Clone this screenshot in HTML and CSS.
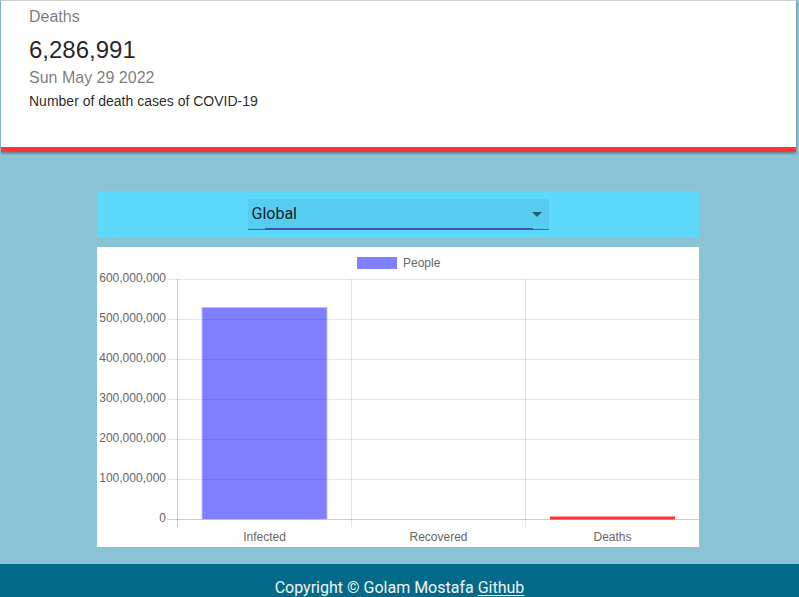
FILE: index.html
```html
<!DOCTYPE html>
<html lang="en">
<head>
<meta charset="utf-8">
<title>COVID-19 Tracker</title>
<link rel="stylesheet" href="styles.css">
</head>
<body>
<div class="page">
  <div class="card">
    <p class="card-label">Deaths</p>
    <h2 class="card-value">6,286,991</h2>
    <p class="card-date">Sun May 29 2022</p>
    <p class="card-desc">Number of death cases of COVID-19</p>
  </div>

  <div class="picker">
    <div class="select">
      <span class="select-value">Global</span>
      <svg class="select-icon" viewBox="0 0 24 24" width="24" height="24"><path d="M7 10l5 5 5-5z"/></svg>
    </div>
  </div>

  <div class="chart">
    <svg class="chart-svg" width="602" height="300" viewBox="0 0 602 300">
      <g class="legend">
        <rect x="260" y="10" width="40" height="12" fill="rgba(0,0,255,0.5)"/>
        <text x="306" y="19.5" class="tick">People</text>
      </g>
      <g class="grid" shape-rendering="crispEdges">
        <line x1="70" y1="32.5" x2="602" y2="32.5"/>
        <line x1="70" y1="72.5" x2="602" y2="72.5"/>
        <line x1="70" y1="112.5" x2="602" y2="112.5"/>
        <line x1="70" y1="152.5" x2="602" y2="152.5"/>
        <line x1="70" y1="192.5" x2="602" y2="192.5"/>
        <line x1="70" y1="232.5" x2="602" y2="232.5"/>
        <line x1="254.5" y1="32" x2="254.5" y2="280"/>
        <line x1="428.5" y1="32" x2="428.5" y2="280"/>
      </g>
      <g class="axis" shape-rendering="crispEdges">
        <line x1="70" y1="272.5" x2="602" y2="272.5"/>
        <line x1="80.5" y1="32" x2="80.5" y2="280"/>
      </g>
      <g class="ylabels">
        <text x="69" y="34.5">600,000,000</text>
        <text x="69" y="74.5">500,000,000</text>
        <text x="69" y="114.5">400,000,000</text>
        <text x="69" y="154.5">300,000,000</text>
        <text x="69" y="194.5">200,000,000</text>
        <text x="69" y="234.5">100,000,000</text>
        <text x="69" y="274.5">0</text>
      </g>
      <rect x="105" y="60.5" width="125" height="212" fill="rgba(0,0,255,0.5)" stroke="rgba(190,190,255,0.9)" stroke-width="1"/>
      <rect x="453" y="269.5" width="125" height="3" fill="rgba(255,0,0,0.8)"/>
      <g class="xlabels">
        <text x="167.5" y="294">Infected</text>
        <text x="341.5" y="294">Recovered</text>
        <text x="515.5" y="294">Deaths</text>
      </g>
    </svg>
  </div>

  <footer class="footer">
    <p class="footer-text">Copyright © Golam Mostafa <a class="footer-link" href="#">Github</a></p>
  </footer>
</div>
</body>
</html>
```

FILE: styles.css
```css
* { box-sizing: border-box; }

html, body {
  margin: 0;
  padding: 0;
  background: #8ac4d4;
  font-family: Roboto, "Liberation Sans", Arial, sans-serif;
  overflow: hidden;
}

.page {
  display: flex;
  flex-direction: column;
  height: 597px;
}

.card {
  margin: 0 3px 0 1px;
  background: #fff;
  border-top: 1px solid #cfcfcf;
  border-bottom: 5px solid #ff3333;
  padding: 4px 28px 37px 28px;
  box-shadow: 0 2px 2px rgba(0, 0, 0, 0.22), 1px 1px 2px rgba(0, 0, 0, 0.14);
  height: 152px;
  font-family: "Liberation Sans", Arial, Helvetica, sans-serif;
}

.card-label {
  margin: 0 0 5px;
  font-size: 16px;
  line-height: 24px;
  color: rgba(0, 0, 0, 0.54);
}

.card-value {
  margin: 0;
  font-size: 24px;
  font-weight: 400;
  line-height: 32px;
  color: rgba(0, 0, 0, 0.87);
}

.card-date {
  margin: 0 0 1px;
  font-size: 16px;
  line-height: 24px;
  color: rgba(0, 0, 0, 0.54);
}

.card-desc {
  margin: 0;
  font-size: 14px;
  line-height: 20px;
  color: rgba(0, 0, 0, 0.87);
}

.picker {
  margin: 39px 0 0 97px;
  width: 602px;
  height: 47px;
  background: #5cd9fd;
  padding: 8px 0;
  display: flex;
  justify-content: center;
}

.select {
  position: relative;
  width: 301px;
  height: 31px;
  background: rgba(0, 0, 0, 0.06);
  border-bottom: 1px solid rgba(0, 0, 0, 0.42);
  display: flex;
  align-items: center;
  padding: 0 0 1px 4px;
}

.select::after {
  content: "";
  position: absolute;
  left: 17px;
  right: 16px;
  bottom: -1px;
  height: 2px;
  background: #3f51b5;
}

.select-value {
  font-size: 16px;
  line-height: 19px;
  color: rgba(0, 0, 0, 0.87);
  padding-top: 0;
}

.select-icon {
  margin-left: auto;
  fill: rgba(0, 0, 0, 0.54);
}

.chart {
  margin: 9px 0 0 97px;
  width: 602px;
  height: 300px;
  background: #fff;
}

.chart-svg {
  display: block;
  font-family: "Liberation Sans", Arial, Helvetica, sans-serif;
  font-size: 12px;
}

.chart-svg text { fill: #666; }
.tick { fill: #666; }

.grid line { stroke: rgba(0, 0, 0, 0.1); stroke-width: 1; }
.axis line { stroke: rgba(0, 0, 0, 0.2); stroke-width: 1; }

.ylabels text { text-anchor: end; }
.xlabels text { text-anchor: middle; }

.footer {
  margin-top: 17px;
  flex: 1;
  background: #046a89;
  display: flex;
  justify-content: center;
}

.footer-text {
  margin: 0;
  padding-top: 12px;
  font-size: 16px;
  line-height: 24px;
  color: #f2f2f2;
}

.footer-link {
  color: #f2f2f2;
  text-decoration: underline;
  text-decoration-color: #fff;
  text-decoration-thickness: 1px;
  text-underline-offset: 2px;
}
```
